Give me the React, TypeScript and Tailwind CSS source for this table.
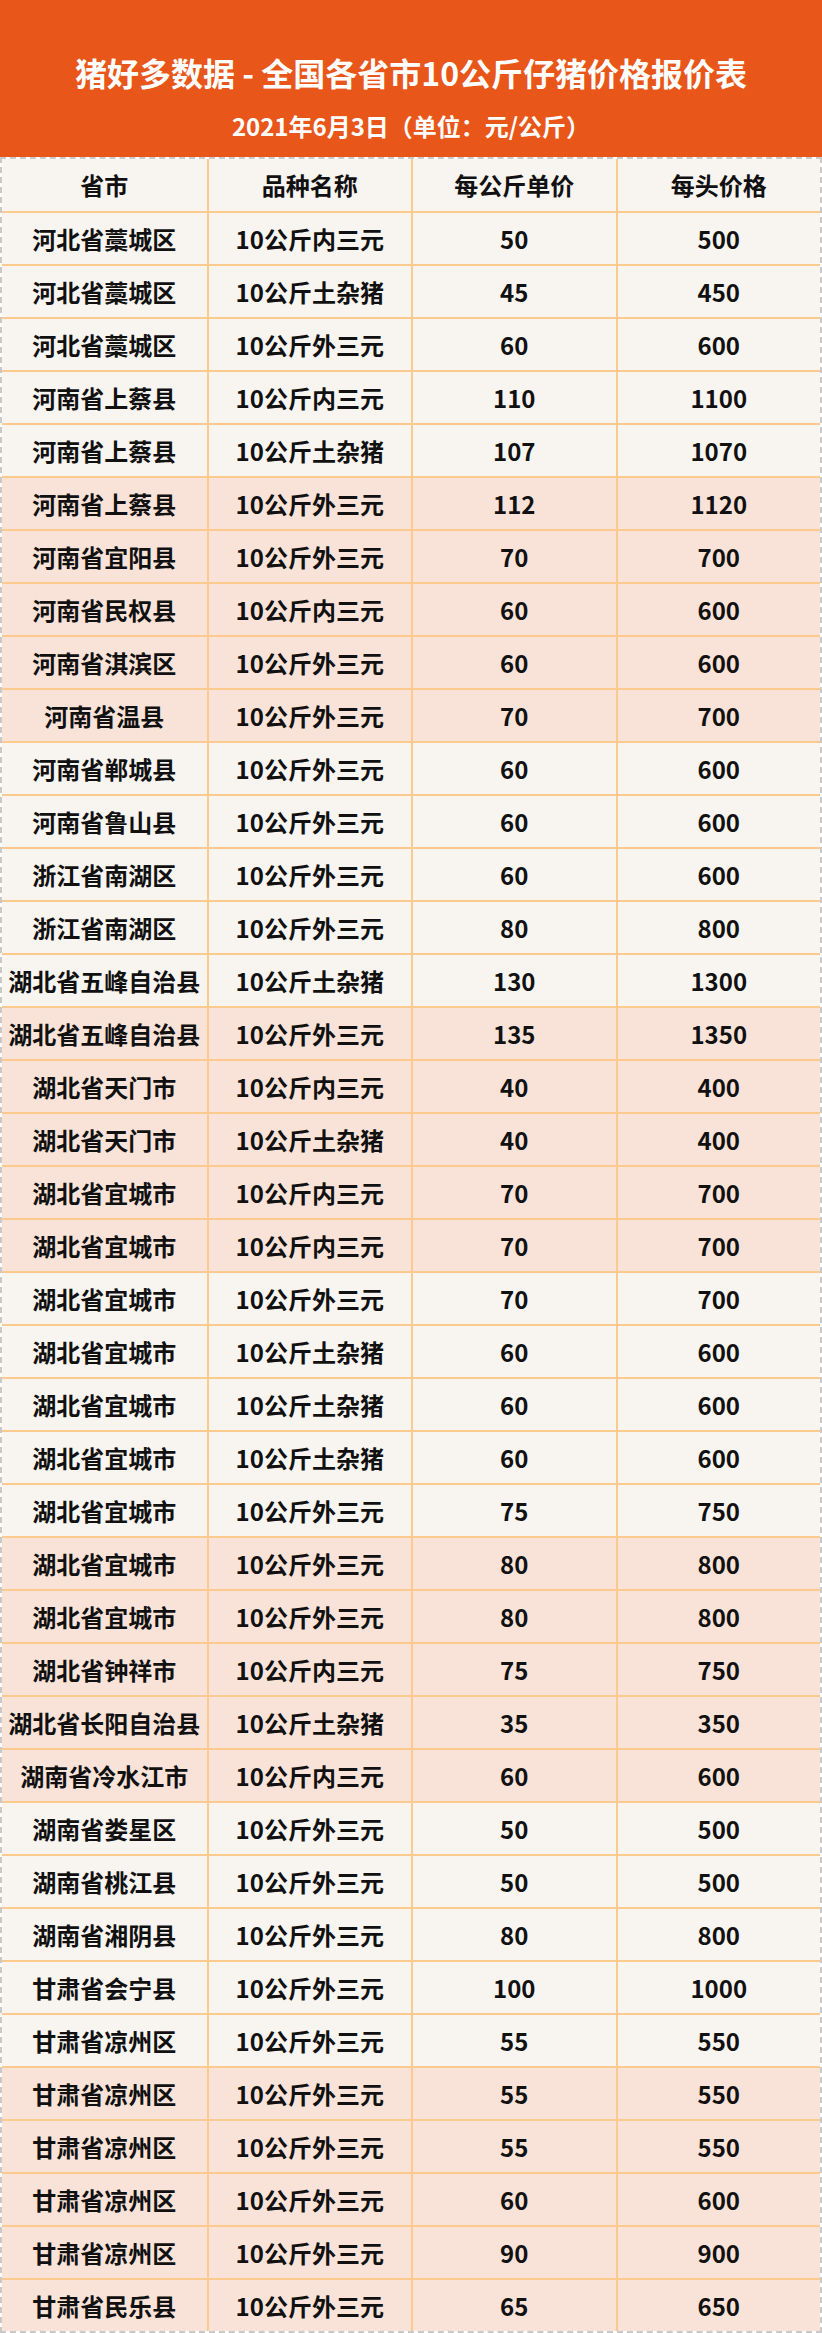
import React from 'react'

type Row = [string, string, number, number]

// 仔猪价格数据（2021年6月3日）
const rows: Row[] = [
  ['河北省藁城区', '10公斤内三元', 50, 500],
  ['河北省藁城区', '10公斤土杂猪', 45, 450],
  ['河北省藁城区', '10公斤外三元', 60, 600],
  ['河南省上蔡县', '10公斤内三元', 110, 1100],
  ['河南省上蔡县', '10公斤土杂猪', 107, 1070],
  ['河南省上蔡县', '10公斤外三元', 112, 1120],
  ['河南省宜阳县', '10公斤外三元', 70, 700],
  ['河南省民权县', '10公斤内三元', 60, 600],
  ['河南省淇滨区', '10公斤外三元', 60, 600],
  ['河南省温县', '10公斤外三元', 70, 700],
  ['河南省郸城县', '10公斤外三元', 60, 600],
  ['河南省鲁山县', '10公斤外三元', 60, 600],
  ['浙江省南湖区', '10公斤外三元', 60, 600],
  ['浙江省南湖区', '10公斤外三元', 80, 800],
  ['湖北省五峰自治县', '10公斤土杂猪', 130, 1300],
  ['湖北省五峰自治县', '10公斤外三元', 135, 1350],
  ['湖北省天门市', '10公斤内三元', 40, 400],
  ['湖北省天门市', '10公斤土杂猪', 40, 400],
  ['湖北省宜城市', '10公斤内三元', 70, 700],
  ['湖北省宜城市', '10公斤内三元', 70, 700],
  ['湖北省宜城市', '10公斤外三元', 70, 700],
  ['湖北省宜城市', '10公斤土杂猪', 60, 600],
  ['湖北省宜城市', '10公斤土杂猪', 60, 600],
  ['湖北省宜城市', '10公斤土杂猪', 60, 600],
  ['湖北省宜城市', '10公斤外三元', 75, 750],
  ['湖北省宜城市', '10公斤外三元', 80, 800],
  ['湖北省宜城市', '10公斤外三元', 80, 800],
  ['湖北省钟祥市', '10公斤内三元', 75, 750],
  ['湖北省长阳自治县', '10公斤土杂猪', 35, 350],
  ['湖南省冷水江市', '10公斤内三元', 60, 600],
  ['湖南省娄星区', '10公斤外三元', 50, 500],
  ['湖南省桃江县', '10公斤外三元', 50, 500],
  ['湖南省湘阴县', '10公斤外三元', 80, 800],
  ['甘肃省会宁县', '10公斤外三元', 100, 1000],
  ['甘肃省凉州区', '10公斤外三元', 55, 550],
  ['甘肃省凉州区', '10公斤外三元', 55, 550],
  ['甘肃省凉州区', '10公斤外三元', 55, 550],
  ['甘肃省凉州区', '10公斤外三元', 60, 600],
  ['甘肃省凉州区', '10公斤外三元', 90, 900],
  ['甘肃省民乐县', '10公斤外三元', 65, 650],
]

const headers = ['省市', '品种名称', '每公斤单价', '每头价格']

const font = { fontFamily: '"Noto Sans CJK SC", "Noto Sans", sans-serif' }

function Cell({ children, first }: { children: React.ReactNode; first?: boolean }) {
  return (
    <div
      className={
        'flex items-center justify-center text-[24px] font-bold text-[#111] whitespace-nowrap ' +
        (first ? '' : 'border-l-2 border-[#fcca8c]')
      }
    >
      {children}
    </div>
  )
}

export default function App() {
  return (
    <div className="w-[822px] bg-white" style={font}>
      {/* 标题 */}
      <div className="h-[157px] bg-[#e8561a] flex flex-col items-center pt-[52px] text-white font-bold">
        <div className="h-[40px] leading-[40px] text-[32px]">猪好多数据 - 全国各省市10公斤仔猪价格报价表</div>
        <div className="h-[30px] leading-[30px] text-[24px] mt-[19px]">2021年6月3日（单位：元/公斤）</div>
      </div>

      {/* 表格 */}
      <div className="border-2 border-t-2 border-dashed border-[#c9c9c9]">
        <div className="grid grid-cols-4 h-[52px] bg-[#f8f4f0]">
          {headers.map((h, i) => (
            <Cell key={h} first={i === 0}>{h}</Cell>
          ))}
        </div>
        {rows.map((r, i) => {
          const peach = Math.floor(i / 5) % 2 === 1
          return (
            <div
              key={i}
              className={
                'grid grid-cols-4 h-[53px] border-t-2 border-[#fcca8c] ' +
                (peach ? 'bg-[#f9e3d8]' : 'bg-[#f8f4f0]')
              }
            >
              <Cell first>{r[0]}</Cell>
              <Cell>{r[1]}</Cell>
              <Cell>{r[2]}</Cell>
              <Cell>{r[3]}</Cell>
            </div>
          )
        })}
      </div>
    </div>
  )
}
